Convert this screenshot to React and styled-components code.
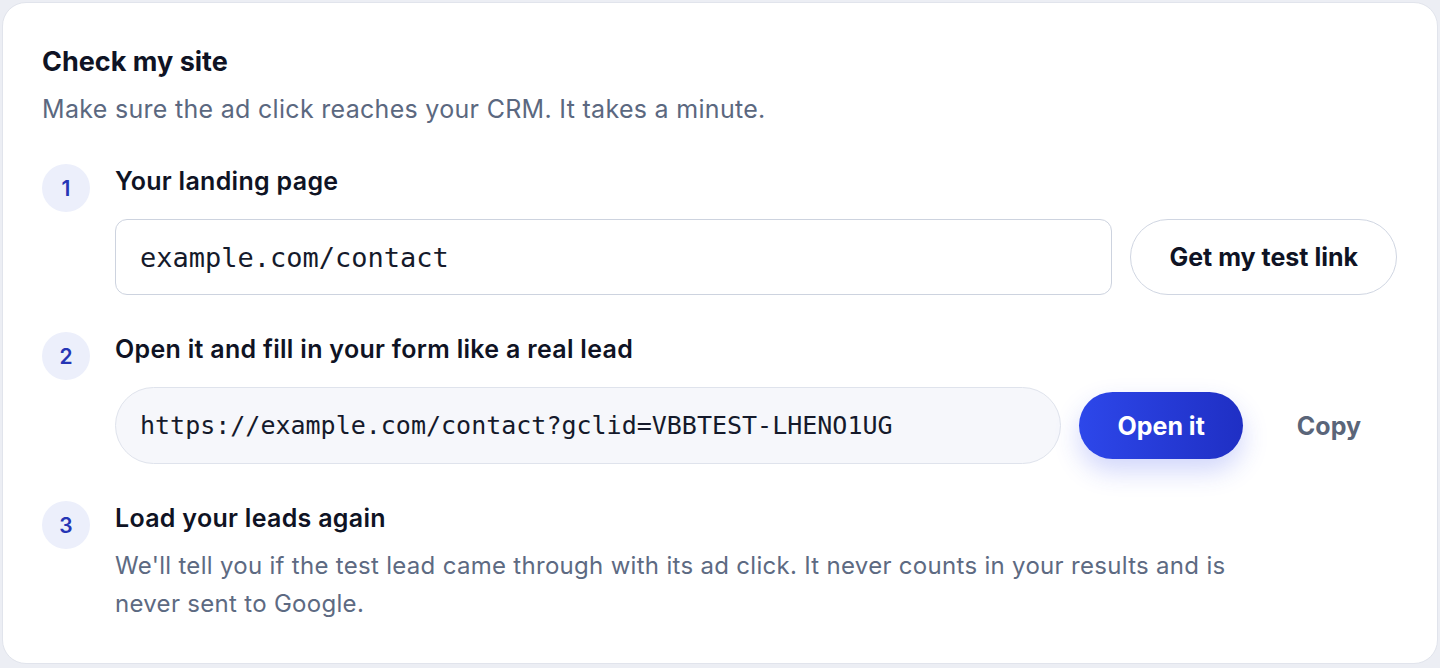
import React from 'react';
import styled, { createGlobalStyle } from 'styled-components';

const GlobalStyle = createGlobalStyle`
  html, body {
    margin: 0;
    padding: 0;
    background: #eceef4;
  }
  body {
    font-family: Inter, "Noto Sans", "Liberation Sans", sans-serif;
    color: #0f1324;
  }
  * { box-sizing: border-box; }
`;

const steps = [
  { n: 1, title: 'Your landing page' },
  { n: 2, title: 'Open it and fill in your form like a real lead' },
  { n: 3, title: 'Load your leads again' },
];

const App = () => {
  return (
    <>
      <GlobalStyle />
      <Card>
        <Title>Check my site</Title>
        <Subtitle>Make sure the ad click reaches your CRM. It takes a minute.</Subtitle>
        <StepList>
          <Step>
            <StepNum>{steps[0].n}</StepNum>
            <StepBody>
              <StepTitle>{steps[0].title}</StepTitle>
              <FieldRow>
                <UrlInput defaultValue="example.com/contact" />
                <GhostButton>Get my test link</GhostButton>
              </FieldRow>
            </StepBody>
          </Step>
          <Step>
            <StepNum>{steps[1].n}</StepNum>
            <StepBody>
              <StepTitle>{steps[1].title}</StepTitle>
              <FieldRow>
                <LinkBox>https://example.com/contact?gclid=VBBTEST-LHENO1UG</LinkBox>
                <PrimaryButton>Open it</PrimaryButton>
                <TextButton>Copy</TextButton>
              </FieldRow>
            </StepBody>
          </Step>
          <Step>
            <StepNum>{steps[2].n}</StepNum>
            <StepBody>
              <StepTitle>{steps[2].title}</StepTitle>
              <StepText>
                We'll tell you if the test lead came through with its ad click. It never counts in your results and is never sent to Google.
              </StepText>
            </StepBody>
          </Step>
        </StepList>
      </Card>
    </>
  );
};

export default App;

const Card = styled.div`
  margin: 2px;
  background: #ffffff;
  border: 1px solid #e1e4ec;
  border-radius: 24px;
  padding: 43px 40px 40px 39px;
`;

const Title = styled.h1`
  margin: 0;
  font-size: 27px;
  line-height: 32px;
  font-weight: 700;
  color: #0f1324;
`;

const Subtitle = styled.p`
  margin: 15px 0 0;
  font-size: 25px;
  line-height: 32px;
  letter-spacing: 0.3px;
  color: #5b6880;
`;

const StepList = styled.div`
  display: flex;
  flex-direction: column;
  gap: 37px;
  margin-top: 39px;
`;

const Step = styled.div`
  display: grid;
  grid-template-columns: 48px 1fr;
  column-gap: 25px;
  align-items: start;
`;

const StepNum = styled.div`
  width: 48px;
  height: 48px;
  border-radius: 50%;
  background: #eceffb;
  color: #2535b5;
  font-size: 21px;
  font-weight: 600;
  display: flex;
  align-items: center;
  justify-content: center;
`;

const StepBody = styled.div`
  display: flex;
  flex-direction: column;
  padding-top: 1px;
`;

const StepTitle = styled.h2`
  margin: 0;
  font-size: 25px;
  line-height: 32px;
  font-weight: 600;
  letter-spacing: 0.3px;
  color: #0f1324;
`;

const FieldRow = styled.div`
  display: flex;
  align-items: center;
  gap: 18px;
  margin-top: 22px;
`;

const UrlInput = styled.input`
  flex: 1;
  min-width: 0;
  height: 76px;
  padding: 0 24px;
  border: 1.5px solid #cdd3df;
  border-radius: 12px;
  background: #ffffff;
  font-family: "DejaVu Sans Mono", "Liberation Mono", monospace;
  font-size: 27px;
  color: #151a2b;
  outline: none;
`;

const GhostButton = styled.button`
  height: 76px;
  padding: 0 38px;
  border: 1.5px solid #d0d6e2;
  border-radius: 999px;
  background: #ffffff;
  font-family: inherit;
  font-size: 25px;
  font-weight: 700;
  color: #0f1324;
  cursor: pointer;
`;

const LinkBox = styled.div`
  flex: 1;
  min-width: 0;
  height: 77px;
  display: flex;
  align-items: center;
  padding: 0 24px;
  border: 1.5px solid #dfe3ec;
  border-radius: 999px;
  background: #f6f7fb;
  font-family: "DejaVu Sans Mono", "Liberation Mono", monospace;
  font-size: 25px;
  color: #151a2b;
  white-space: nowrap;
  overflow: hidden;
`;

const PrimaryButton = styled.button`
  height: 67px;
  padding: 0 38px;
  border: none;
  border-radius: 999px;
  background: linear-gradient(90deg, #2d47ea 0%, #1f2fc4 100%);
  box-shadow: 0 12px 26px rgba(45, 70, 235, 0.22);
  font-family: inherit;
  font-size: 25px;
  font-weight: 700;
  color: #ffffff;
  cursor: pointer;
`;

const TextButton = styled.button`
  height: 67px;
  padding: 0 36px;
  border: none;
  background: transparent;
  font-family: inherit;
  font-size: 25px;
  font-weight: 700;
  color: #5a6579;
  cursor: pointer;
`;

const StepText = styled.p`
  margin: 13px 0 0;
  max-width: 1140px;
  font-size: 24px;
  line-height: 38px;
  letter-spacing: 0.3px;
  color: #5d6a82;
`;
